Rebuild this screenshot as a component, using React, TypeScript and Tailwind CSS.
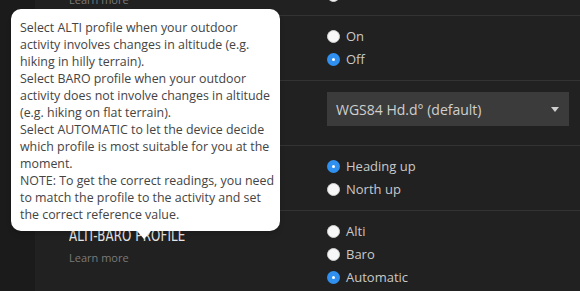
import React from "react";

const Radio = ({ label, checked }: { label: string; checked?: boolean }) => (
  <div className="flex h-[23px] items-center gap-[6px]">
    {checked ? (
      <span className="flex h-[13px] w-[13px] items-center justify-center rounded-full bg-[#3090f0]">
        <span className="h-[3px] w-[3px] rounded-full bg-white" />
      </span>
    ) : (
      <span className="h-[13px] w-[13px] rounded-full border border-[#d0d0d0] bg-[#f7f7f7]" />
    )}
    <span className="text-[13px] text-[#c9c9c9]">{label}</span>
  </div>
);

const tooltipLines = [
  "Select ALTI profile when your outdoor",
  "activity involves changes in altitude (e.g.",
  "hiking in hilly terrain).",
  "Select BARO profile when your outdoor",
  "activity does not involve changes in altitude",
  "(e.g. hiking on flat terrain).",
  "Select AUTOMATIC to let the device decide",
  "which profile is most suitable for you at the",
  "moment.",
  "NOTE: To get the correct readings, you need",
  "to match the profile to the activity and set",
  "the correct reference value.",
];

export default function App() {
  return (
    <div
      className="relative flex h-[291px] w-[580px] overflow-hidden bg-[#212121]"
      style={{ fontFamily: '"Open Sans", "Noto Sans", sans-serif' }}
    >
      <div className="w-[35px] shrink-0 bg-[#1b1b1b]" />

      <div className="flex-1">
        {/* partially visible previous setting */}
        <div className="grid h-[16px] grid-cols-[292px_1fr] overflow-hidden border-b border-[#333]">
          <div className="pl-[34px]">
            <div className="-mt-[8px] text-[11px] text-[#7a7a7a]">Learn more</div>
          </div>
          <div className="-mt-[16px]">
            <Radio label="" checked={false} />
          </div>
        </div>

        <div className="grid h-[65px] grid-cols-[292px_1fr] border-b border-[#333] pt-[9px]">
          <div />
          <div>
            <Radio label="On" />
            <Radio label="Off" checked />
          </div>
        </div>

        <div className="grid h-[65px] grid-cols-[292px_1fr] border-b border-[#333] pr-[11px] pt-[11px]">
          <div />
          <div className="flex h-[34px] items-center justify-between bg-[#3b3b3b] pl-[9px] pr-[10px]">
            <span className="text-[14px] text-[#cfcfcf]">WGS84 Hd.d° (default)</span>
            <span className="h-0 w-0 border-x-[4px] border-t-[5px] border-x-transparent border-t-[#cfcfcf]" />
          </div>
        </div>

        <div className="grid h-[65px] grid-cols-[292px_1fr] border-b border-[#333] pt-[9px]">
          <div />
          <div>
            <Radio label="Heading up" checked />
            <Radio label="North up" />
          </div>
        </div>

        <div className="grid grid-cols-[292px_1fr] pt-[9px]">
          <div className="pl-[34px] pt-[6px]">
            <div
              className="text-[16px] leading-[20px] tracking-[0.2px] text-[#e6e6e6]"
              style={{ fontFamily: '"DejaVu Sans Condensed", "Roboto", sans-serif', transform: "scaleX(0.82)", transformOrigin: "left" }}
            >
              ALTI-BARO PROFILE
            </div>
            <div className="mt-[4px] text-[11px] text-[#7a7a7a]">Learn more</div>
          </div>
          <div>
            <Radio label="Alti" />
            <Radio label="Baro" />
            <Radio label="Automatic" checked />
          </div>
        </div>
      </div>

      {/* tooltip */}
      <div className="absolute left-[11px] top-[9px] w-[269px] rounded-[10px] bg-white pb-[8px] pl-[9px] pr-[6px] pt-[10px] text-[12.4px] leading-[17px] text-[#444] shadow-md">
        {tooltipLines.map((l) => (
          <div key={l} className="whitespace-nowrap">
            {l}
          </div>
        ))}
        <span className="absolute left-[126px] top-full h-0 w-0 border-x-[7px] border-t-[8px] border-x-transparent border-t-white" />
      </div>
    </div>
  );
}
